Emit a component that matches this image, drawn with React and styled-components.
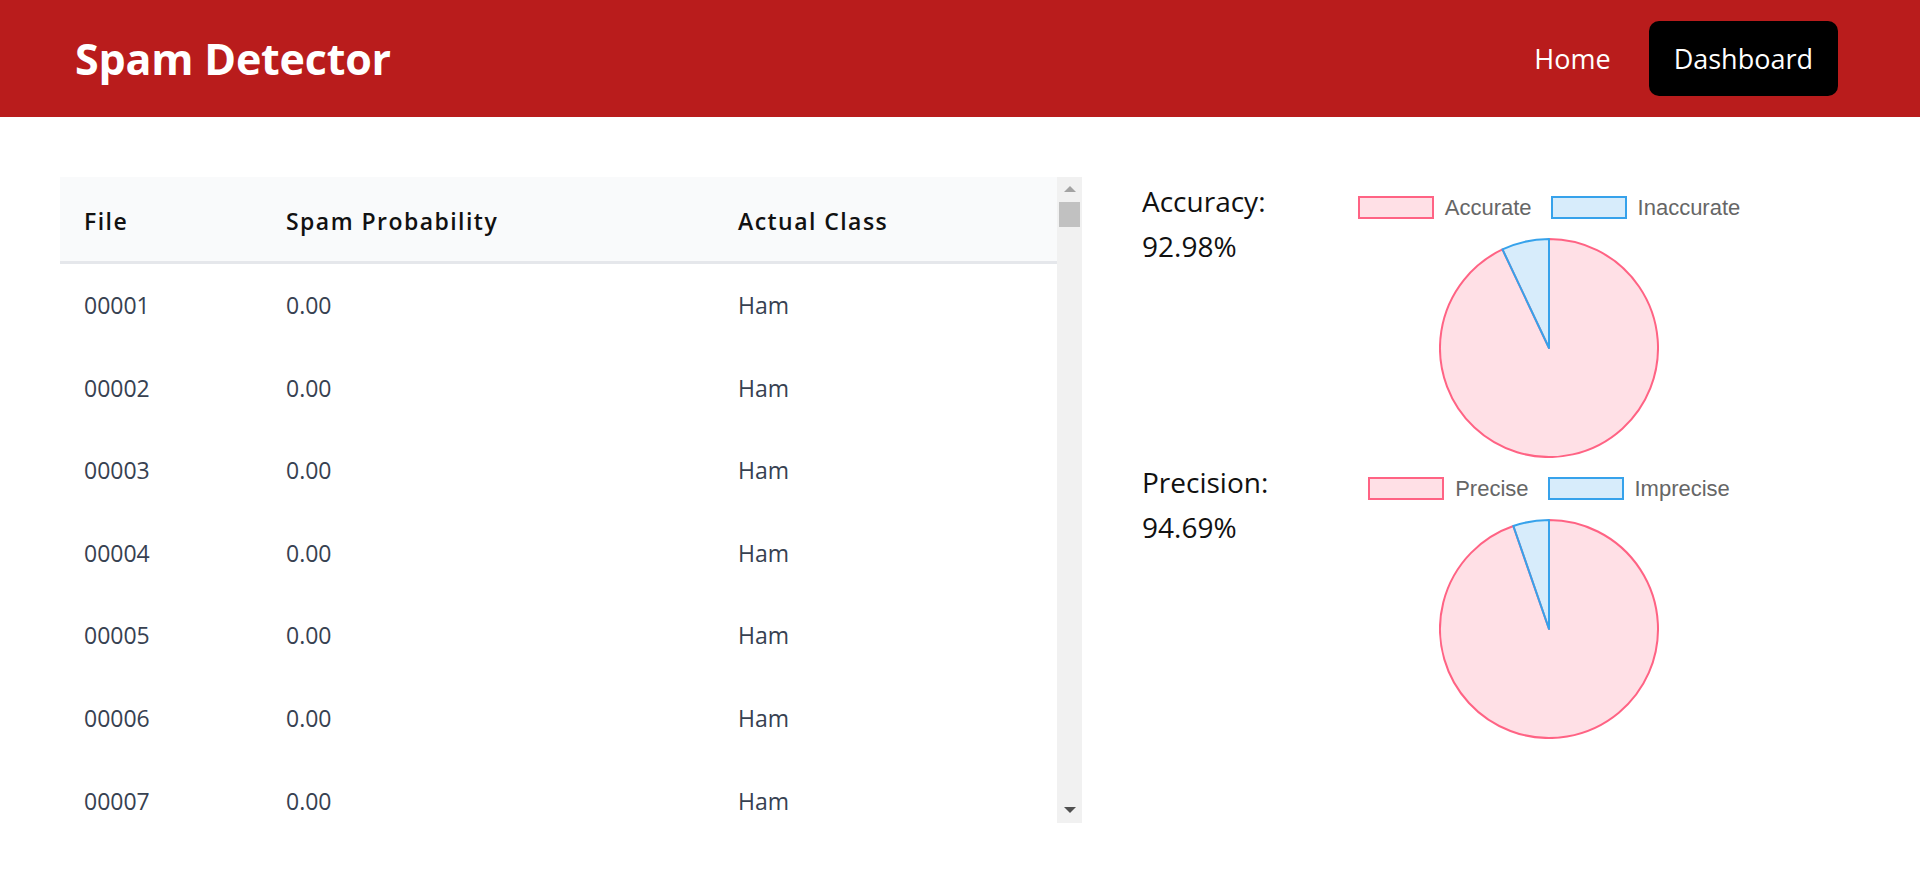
import React from "react";
import styled, { createGlobalStyle } from "styled-components";

const GlobalStyle = createGlobalStyle`
  html, body { margin: 0; padding: 0; background: #ffffff; }
  body { font-family: "Open Sans", "Noto Sans", sans-serif; color: #111827; }
  * { box-sizing: border-box; }
`;

const Header = styled.header`
  height: 117px;
  background: #b91c1c;
  display: flex;
  align-items: center;
  justify-content: space-between;
  padding: 0 82px 0 75px;
`;

const Title = styled.h1`
  margin: 0;
  color: #ffffff;
  font-size: 43px;
  font-weight: 700;
  letter-spacing: -0.2px;
`;

const Nav = styled.nav`
  display: flex;
  align-items: center;
  gap: 13px;
`;

const NavLink = styled.a`
  display: flex;
  align-items: center;
  height: 75px;
  padding: 0 25px;
  border-radius: 10px;
  font-size: 27px;
  color: #ffffff;
  text-decoration: none;
  background: ${(p) => (p.$active ? "#000000" : "transparent")};
  cursor: pointer;
`;

const Main = styled.main`
  display: flex;
  align-items: flex-start;
  padding: 60px 0 0 60px;
`;

const TableFrame = styled.div`
  display: flex;
  width: 1022px;
  height: 646px;
  flex-shrink: 0;
`;

const TableViewport = styled.div`
  flex: 1;
  overflow: hidden;
`;

const ScrollBar = styled.div`
  width: 25px;
  display: flex;
  flex-direction: column;
  background: #f1f1f1;
`;

const ScrollButton = styled.div`
  height: 25px;
  display: flex;
  align-items: center;
  justify-content: center;
`;

const Arrow = styled.span`
  width: 0;
  height: 0;
  border-left: 6px solid transparent;
  border-right: 6px solid transparent;
  ${(p) =>
    p.$down
      ? "border-top: 6px solid #505050; margin-top: -2px;"
      : "border-bottom: 6px solid #a3a3a3; margin-bottom: 2px;"}
`;

const Thumb = styled.div`
  height: 25px;
  margin: 0 2px;
  background: #c1c1c1;
`;

const Track = styled.div`
  flex: 1;
`;

const Table = styled.table`
  width: 100%;
  border-collapse: separate;
  border-spacing: 0;
  table-layout: fixed;
`;

const HeadCell = styled.th`
  height: 87px;
  padding: 4px 24px 0;
  background: #f9fafb;
  border-bottom: 3px solid #e5e7eb;
  text-align: left;
  font-size: 23px;
  font-weight: 600;
  letter-spacing: 1.45px;
  color: #111111;
  width: ${(p) => p.$w || "auto"};
`;

const Cell = styled.td`
  padding: 24px;
  line-height: 34.6px;
  font-size: 23px;
  color: #374151;
  white-space: nowrap;
`;

const Stats = styled.section`
  display: flex;
  flex-direction: column;
  padding-left: 60px;
`;

const StatBlock = styled.div`
  display: flex;
  height: 281px;
`;

const StatLabel = styled.div`
  width: 157px;
  padding-top: 2px;
  font-size: 28px;
  line-height: 45px;
  color: #111111;
`;

const Chart = styled.div`
  width: 500px;
  display: flex;
  flex-direction: column;
  align-items: center;
`;

const Legend = styled.div`
  display: flex;
  align-items: center;
  gap: 19px;
  margin-top: 19px;
  height: 23px;
`;

const LegendItem = styled.div`
  display: flex;
  align-items: center;
  gap: 11px;
  font-family: "Liberation Sans", Arial, sans-serif;
  font-size: 22px;
  color: #666666;
`;

const Swatch = styled.span`
  width: 76px;
  height: 23px;
  border: 2px solid ${(p) => p.$stroke};
  background: ${(p) => p.$fill};
`;

const PieSvg = styled.svg`
  margin-top: 19px;
  display: block;
`;

const RED = { stroke: "rgb(255, 99, 132)", fill: "rgba(255, 99, 132, 0.2)" };
const BLUE = { stroke: "rgb(54, 162, 235)", fill: "rgba(54, 162, 235, 0.2)" };

function slicePath(cx, cy, r, a0, a1) {
  const p = (a) => [cx + r * Math.sin(a), cy - r * Math.cos(a)];
  const [x0, y0] = p(a0);
  const [x1, y1] = p(a1);
  const large = a1 - a0 > Math.PI ? 1 : 0;
  return `M ${cx} ${cy} L ${x0} ${y0} A ${r} ${r} 0 ${large} 1 ${x1} ${y1} Z`;
}

function Pie({ value }) {
  const cx = 110, cy = 110, r = 109;
  const split = (value / 100) * Math.PI * 2;
  return (
    <PieSvg width="220" height="220" viewBox="0 0 220 220">
      <path d={slicePath(cx, cy, r, 0, split)} fill={RED.fill} stroke={RED.stroke} strokeWidth="2" strokeLinejoin="round" />
      <path d={slicePath(cx, cy, r, split, Math.PI * 2)} fill={BLUE.fill} stroke={BLUE.stroke} strokeWidth="2" strokeLinejoin="round" />
    </PieSvg>
  );
}

function StatChart({ label, value, good, bad }) {
  return (
    <StatBlock>
      <StatLabel>
        <div>{label}:</div>
        <div>{value.toFixed(2)}%</div>
      </StatLabel>
      <Chart>
        <Legend>
          <LegendItem>
            <Swatch $stroke={RED.stroke} $fill={RED.fill} />
            {good}
          </LegendItem>
          <LegendItem>
            <Swatch $stroke={BLUE.stroke} $fill={BLUE.fill} />
            {bad}
          </LegendItem>
        </Legend>
        <Pie value={value} />
      </Chart>
    </StatBlock>
  );
}

const rows = Array.from({ length: 7 }, (_, i) => ({
  file: String(i + 1).padStart(5, "0"),
  prob: "0.00",
  cls: "Ham",
}));

export default function App() {
  return (
    <>
      <GlobalStyle />
      <Header>
        <Title>Spam Detector</Title>
        <Nav>
          <NavLink>Home</NavLink>
          <NavLink $active>Dashboard</NavLink>
        </Nav>
      </Header>
      <Main>
        <TableFrame>
          <TableViewport>
            <Table>
              <thead>
                <tr>
                  <HeadCell $w="202px">File</HeadCell>
                  <HeadCell $w="452px">Spam Probability</HeadCell>
                  <HeadCell>Actual Class</HeadCell>
                </tr>
              </thead>
              <tbody>
                {rows.map((r) => (
                  <tr key={r.file}>
                    <Cell>{r.file}</Cell>
                    <Cell>{r.prob}</Cell>
                    <Cell>{r.cls}</Cell>
                  </tr>
                ))}
              </tbody>
            </Table>
          </TableViewport>
          <ScrollBar>
            <ScrollButton><Arrow /></ScrollButton>
            <Thumb />
            <Track />
            <ScrollButton><Arrow $down /></ScrollButton>
          </ScrollBar>
        </TableFrame>
        <Stats>
          <StatChart label="Accuracy" value={92.98} good="Accurate" bad="Inaccurate" />
          <StatChart label="Precision" value={94.69} good="Precise" bad="Imprecise" />
        </Stats>
      </Main>
    </>
  );
}
